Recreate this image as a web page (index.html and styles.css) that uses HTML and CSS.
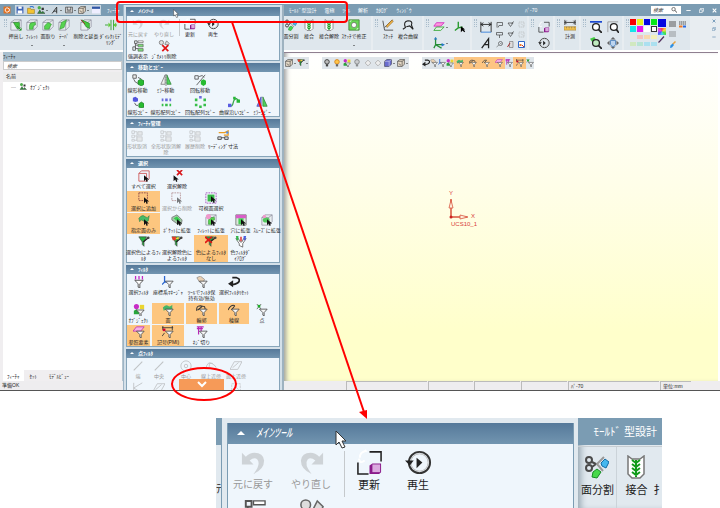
FILE: index.html
```
<!DOCTYPE html>
<html lang="ja">
<head>
<meta charset="utf-8">
<title>メインツール</title>
<link rel="stylesheet" href="styles.css">
</head>
<body>
<svg class="defs" aria-hidden="true">
  <defs>
    <symbol id="cube" viewBox="0 0 14 14"><path d="M1 4l4-3h8v8l-4 4H1z" fill="#e9eef0" stroke="#889" stroke-width=".8"/><path d="M1 4h8v9M9 4l4-3" fill="none" stroke="#889" stroke-width=".8"/></symbol>
    <symbol id="extrude" viewBox="0 0 14 14"><use href="#cube"/><path d="M4 4h7v7H8z" fill="#43c83c" stroke="#176f17" stroke-width=".6"/><path d="M8 8l5 5M13 10v3h-3" stroke="#1b8a1b" fill="none"/></symbol>
    <symbol id="fillet" viewBox="0 0 14 14"><use href="#cube"/><path d="M4 8q0-4 4-4h3v3q-3 0-3 5H4z" fill="#58d450" stroke="#278a25" stroke-width=".6"/></symbol>
    <symbol id="chamfer" viewBox="0 0 14 14"><use href="#cube"/><path d="M3 8l4-4 4 2-3 6H3z" fill="#58d450" stroke="#278a25" stroke-width=".6"/></symbol>
    <symbol id="draft" viewBox="0 0 14 14"><use href="#cube"/><path d="M4 4l6-3-3 9-5 2z" fill="#58d450" stroke="#278a25" stroke-width=".6"/></symbol>
    <symbol id="extend" viewBox="0 0 14 14"><use href="#cube"/><path d="M2 1l9 4v6l-4-2z" fill="#43c83c" stroke="#176f17" stroke-width=".6"/><path d="M1 1l5 5" stroke="#a22"/></symbol>
    <symbol id="direct" viewBox="0 0 14 14"><path d="M7 1v12M10 1v12M0 7h4M14 7h-4" stroke="#2a9c2a"/><path d="M4 4v6l3-3zM13 4v6l-3-3z" fill="#62cf35"/></symbol>
    <symbol id="scissors" viewBox="0 0 24 24"><g fill="none" stroke="#4a4a4a" stroke-width="2"><circle cx="4" cy="5" r="3"/><circle cx="4" cy="13" r="3"/><path d="M7 7l4 2-4 3"/></g><path d="M19 2l-7 7 6 7" fill="none" stroke="#999" stroke-width="2"/><path d="M16 8l4-4 4 3-3 6-4-2z" fill="#45b8ef" stroke="#126ba5"/><path d="M8 17l4-3 4 3-4 6-5-1z" fill="#47d94a" stroke="#168d25"/></symbol>
    <symbol id="join" viewBox="0 0 24 24"><path d="M4 1l4 3h8l4-3v18l-4 4H8l-4-4z" fill="#fff" stroke="#777" stroke-width="1.5"/><path d="M8 5l4 3 4-3M8 9l4 3 4-3M8 13l4 3 4-3M8 17l4 3 4-3M12 5v17" fill="none" stroke="#119b1b" stroke-width="2"/></symbol>
    <symbol id="sketchfix" viewBox="0 0 14 14"><path d="M1 1h12v12H1z" fill="#69d656" stroke="#47863e"/><circle cx="7" cy="7" r="3" fill="#fff" stroke="#555" stroke-width=".7"/><path d="M2 3l2-1M12 11l-2 1" stroke="#fff"/></symbol>
    <symbol id="sketch" viewBox="0 0 14 14"><path d="M1 2l2 11h10M3 10l9-9" fill="none" stroke="#444"/><path d="M5 8l7-7 1 2-7 7z" fill="#f0b445" stroke="#875a19" stroke-width=".6"/></symbol>
    <symbol id="curve" viewBox="0 0 14 14"><path d="M1 12l3-2q-3-7 3-8 6 0 4 5l2 5-4-4-4 1" fill="none" stroke="#222" stroke-width="1.3"/></symbol>
    <symbol id="layers" viewBox="0 0 14 14"><path d="M4 2h9l-4 4H1z" fill="#f9d" stroke="#d42ec2"/><path d="M4 7h9l-4 4H1z" fill="#dff5df" stroke="#37a637"/></symbol>
    <symbol id="axes" viewBox="0 0 14 14"><path d="M3 1v8h9M3 9l-2 4M3 9l7 4" fill="none" stroke="#248e36" stroke-width="1.5"/><path d="M1 3l2-3 2 3M10 7l4 2-4 2" fill="#2578c9"/></symbol>
    <symbol id="axescur" viewBox="0 0 14 14"><path d="M5 1v7l-4 3M5 8l5-1" fill="none" stroke="#299b2f" stroke-width="1.6"/><path d="M8 6v7l2-2 2 2 1-1-2-2h2z"/></symbol>
    <symbol id="dim" viewBox="0 0 14 14"><path d="M1 1v12M13 1v12M1 4h12M1 4l3-2M1 4l3 2M13 4l-3-2M13 4l-3 2" stroke="#222" fill="none"/><path d="M1 13h12" stroke="#2b78d8"/></symbol>
    <symbol id="note" viewBox="0 0 14 14"><path d="M2 13L10 2v11M5 9h5" stroke="#222" fill="none" stroke-width="1.5"/></symbol>
    <symbol id="flag" viewBox="0 0 14 14"><path d="M2 13V3h11v6H6M6 9l-2 4" stroke="#444" fill="none" stroke-width="1.4"/></symbol>
    <symbol id="tri" viewBox="0 0 14 14"><path d="M2 4h10l-5 7zM9 5l5-4" stroke="#444" fill="none" stroke-width="1.4"/></symbol>
    <symbol id="tee" viewBox="0 0 14 14"><path d="M1 3h12v5H1zM7 8v6" stroke="#444" fill="none" stroke-width="1.4"/></symbol>
    <symbol id="frame" viewBox="0 0 14 14"><path d="M2 2h10v10H2z" stroke="#aaa" fill="none" stroke-dasharray="3 1"/><path d="M6 5l4 4" stroke="#aaa"/></symbol>
    <symbol id="balloon" viewBox="0 0 14 14"><circle cx="9" cy="5" r="4" stroke="#444" fill="none" stroke-width="1.3"/><path d="M6 8l-5 4M8 5h3" stroke="#444"/></symbol>
    <symbol id="doc" viewBox="0 0 14 14"><path d="M5 1h7v12H5z" fill="#ddd" stroke="#555"/><path d="M1 12l5-8" stroke="#a33" stroke-width="2"/></symbol>
    <symbol id="table" viewBox="0 0 14 14"><path d="M1 1h12v12H1z" fill="#fff" stroke="#2f68c9" stroke-width="2"/><path d="M3 6h4v4H3z" fill="#f17a28"/><path d="M8 8l4 4" stroke="#b33" stroke-width="2"/></symbol>
    <symbol id="update" viewBox="0 0 28 28"><path d="M14 3h12v10M2 14v12h11" fill="none" stroke="#222" stroke-width="1.6"/><path d="M4 9q0-6 6-7l-1-1M9 12q-5 4-6-2" fill="none" stroke="#fff" stroke-width="2"/><path d="M14 17l3-2h9v9l-2 2H14z" fill="#8a1b8a"/><path d="M17 16h8v8h-8z" fill="#dba9df"/></symbol>
    <symbol id="replay" viewBox="0 0 28 28"><circle cx="15" cy="14" r="11" fill="none" stroke="#333" stroke-width="2"/><circle cx="15" cy="14" r="9" fill="none" stroke="#bbb"/><path d="M0 12h9l-4 5z" fill="#222"/><path d="M12 9l6 5-6 6z" fill="#222"/></symbol>
    <symbol id="undo" viewBox="0 0 28 28"><path d="M2 4v12h12l-4-4q5-4 8-1 4 5-4 15 11-5 11-14Q24 4 15 4 10 4 6 8z" fill="#b4b7b9"/></symbol>
    <symbol id="redo" viewBox="0 0 28 28"><path d="M26 4v12H14l4-4q-5-4-8-1-4 5 4 15Q3 21 3 12 4 4 13 4q5 0 9 4z" fill="#b4b7b9"/></symbol>
    <symbol id="ruler" viewBox="0 0 14 14"><path d="M1 1v6M13 1v6M1 4h12M3 2L1 4l2 2M11 2l2 2-2 2" stroke="#333" fill="none"/><path d="M0 9h14v4H0z" fill="#f4c44d" stroke="#997224" stroke-width=".6"/><path d="M3 9v2M6 9v2M9 9v2M12 9v2" stroke="#765" stroke-width=".7"/></symbol>
    <symbol id="zoomw" viewBox="0 0 14 14"><path d="M0 1h14" stroke="#1b48d0" stroke-width="2"/><circle cx="7" cy="7" r="4" fill="#fff" stroke="#222" stroke-width="1.5"/><path d="M10 10l4 4" stroke="#222" stroke-width="2"/></symbol>
    <symbol id="zoomf" viewBox="0 0 14 14"><path d="M1 13V1h12" stroke="#999" fill="none"/><circle cx="8" cy="7" r="4" fill="#fff" stroke="#222" stroke-width="1.5"/><path d="M11 10l3 4" stroke="#222" stroke-width="2"/></symbol>
    <symbol id="zoomo" viewBox="0 0 14 14"><path d="M0 2l5-2 3 4-4 4z" fill="#4c4"/><circle cx="7" cy="7" r="4" fill="#bfeabf" stroke="#222" stroke-width="1.5"/><path d="M10 10l4 4" stroke="#222" stroke-width="2"/></symbol>
    <symbol id="pan" viewBox="0 0 14 14"><path d="M7 0l3 3H4zM7 14l3-3H4zM0 7l3-3v6zM14 7l-3-3v6z" fill="#666"/><path d="M4 4h6v5l-2 2H6L4 9z" fill="#bcd4ef" stroke="#457bb8"/></symbol>
    <symbol id="lines" viewBox="0 0 14 14"><path d="M0 2h14M0 6h14M0 10h14" stroke="#555" stroke-width="2"/></symbol>
    <symbol id="linec" viewBox="0 0 14 14"><path d="M0 2h14M0 6h14" stroke="#555" stroke-width="2" stroke-dasharray="3 1"/><path d="M0 11h7" stroke="#f17824" stroke-width="4"/><path d="M8 11h6" stroke="#276ae6" stroke-width="4"/></symbol>
    <symbol id="brush" viewBox="0 0 14 14"><path d="M13 1L7 7" stroke="#e8a33f" stroke-width="3"/><path d="M7 5l3 3-4 5-4 1 1-5z" fill="#2c8fe2"/></symbol>
    <symbol id="pen" viewBox="0 0 14 14"><path d="M12 1L4 10l-3 3" stroke="#53305d" stroke-width="2.5"/></symbol>
    <symbol id="tree" viewBox="0 0 14 14"><path d="M3 1h3v3H3zM1 8h3v4H1zM4 4v6h3M4 6h3" fill="none" stroke="#555"/><path d="M7 5h6v3H7zM7 10h6v3H7z" fill="#7de079" stroke="#555" stroke-width=".7"/><path d="M7 1h6v2H7z" fill="#fff" stroke="#555" stroke-width=".7"/></symbol>
    <symbol id="geodel" viewBox="0 0 14 14"><circle cx="4" cy="3" r="2.5" fill="#ddd" stroke="#666" stroke-width=".8"/><path d="M8 5l2-4 3 3-1 2z" fill="#ddd" stroke="#666" stroke-width=".8"/><path d="M5 6l7 7M12 6l-7 7" stroke="#e21414" stroke-width="2"/></symbol>
    <symbol id="move" viewBox="0 0 14 14"><path d="M1 1h4v4H1z" fill="#eee" stroke="#555"/><path d="M2 6q1 4 5 5M7 4l4 2" fill="none" stroke="#555"/><path d="M7 8l3-2 4 2v4l-3 2-4-2z" fill="#28bb31" stroke="#176b20" stroke-width=".7"/></symbol>
    <symbol id="copy" viewBox="0 0 14 14"><path d="M1 2l3-1 3 2v3L4 7 1 6z" fill="#5256dd"/><path d="M3 8q1 4 4 3" fill="none" stroke="#555"/><path d="M8 9l3-2 3 2v4l-3 1-3-1z" fill="#28bb31" stroke="#176b20" stroke-width=".7"/></symbol>
    <symbol id="mirror" viewBox="0 0 14 14"><path d="M6 1v11H1z" fill="#eee" stroke="#666" stroke-width=".8"/><path d="M8 1v11h5z" fill="#50d25c" stroke="#277c30" stroke-width=".8"/><path d="M7 0v14" stroke="#777" stroke-dasharray="2 1"/></symbol>
    <symbol id="mirrorc" viewBox="0 0 14 14"><path d="M6 1v11H1z" fill="#777bea" stroke="#44a" stroke-width=".8"/><path d="M8 1v11h5z" fill="#50d25c" stroke="#277c30" stroke-width=".8"/></symbol>
    <symbol id="rotate" viewBox="0 0 14 14"><path d="M1 2h4v4H1zM13 1L3 13M6 3q4-3 6 1" fill="none" stroke="#555"/><path d="M8 8l3-2 3 2v4l-3 2-3-2z" fill="#28bb31"/></symbol>
    <symbol id="grid6" viewBox="0 0 14 14"><path d="M2 3h2v3H2zM6 3h3v3H6zM11 3h2v3h-2z" fill="#696bdc"/><path d="M2 9h2v3H2zM6 9h3v3H6zM11 9h2v3h-2z" fill="#37bf49"/></symbol>
    <symbol id="ring" viewBox="0 0 14 14"><path d="M6 0h3v3H6z" fill="#696bdc"/><path d="M1 3h3v3H1zM11 3h3v3h-3zM1 9h3v3H1zM11 9h3v3h-3zM6 11h3v3H6z" fill="#37bf49"/></symbol>
    <symbol id="path" viewBox="0 0 14 14"><path d="M2 11q3 2 4-3t4-5l3 3" fill="none" stroke="#39a64b" stroke-width="1.5"/><path d="M0 9h4v4H0z" fill="#5a5de2"/><path d="M10 4h4v4h-4zM6 1h3v3H6z" fill="#28b638"/></symbol>
    <symbol id="feat" viewBox="0 0 14 14"><path d="M1 1h3v3H1zM1 6h3v3H1zM1 11h3v2H1zM4 2h3M4 7h3M4 12h3M7 2v10" fill="none" stroke="#aaa"/><path d="M8 2h5v4H8zM7 8h6v5H7z" fill="#ddd" stroke="#aaa"/></symbol>
    <symbol id="lead" viewBox="0 0 14 14"><path d="M1 8h4v3H1zM9 8h4v3H9zM5 9h4" fill="#ddd" stroke="#444"/><path d="M2 3h7l4-2v5H8" fill="none" stroke="#eb9c1f" stroke-width="1.5"/><circle cx="12" cy="3" r="1.5" fill="#5590e0"/></symbol>
    <symbol id="arrow" viewBox="0 0 14 14"><path d="M7 6v7l2-2 1 3 1.500-1-1-2h2.500z" fill="#111"/></symbol>
    <symbol id="selall" viewBox="0 0 14 14"><path d="M1 4l3-3h9v9l-3 3H1zM1 4h9v9" fill="none" stroke="#c55"/><use href="#arrow"/></symbol>
    <symbol id="desel" viewBox="0 0 14 14"><use href="#arrow" x="-4"/><path d="M7 0l6 6M13 0L7 6" stroke="#d8171c" stroke-width="2"/></symbol>
    <symbol id="seladd" viewBox="0 0 14 14"><path d="M1 1h10v9H1z" fill="none" stroke="#844" stroke-dasharray="2 1"/><use href="#arrow"/></symbol>
    <symbol id="vis" viewBox="0 0 14 14"><path d="M1 1h12v12H1z" fill="none" stroke="#a34cb8" stroke-dasharray="2 1"/><path d="M3 3h8v8H3z" fill="#39b84a"/><use href="#arrow" y="-1"/></symbol>
    <symbol id="face" viewBox="0 0 14 14"><path d="M1 5q4-5 7-2t5-1l-1 6q-3 3-6 0T2 9z" fill="#48bb67" stroke="#2c7f44" stroke-width=".7"/><use href="#arrow"/></symbol>
    <symbol id="pocket" viewBox="0 0 14 14"><path d="M1 4l6-3 6 6-1 5H8L1 7z" fill="#a5c9a9" stroke="#666" stroke-width=".8"/><path d="M3 5l4-2 4 4-3 2z" fill="#37cd4e"/><use href="#arrow"/></symbol>
    <symbol id="fext" viewBox="0 0 14 14"><use href="#fillet"/><circle cx="4" cy="3" r="3" fill="#e9c"/><use href="#arrow"/></symbol>
    <symbol id="hole" viewBox="0 0 14 14"><path d="M1 1h12v12H1z" fill="#dce8de" stroke="#777"/><path d="M1 1h12v4H1z" fill="#d75fc7"/><path d="M4 5h6v7H4z" fill="#47cc56"/><use href="#arrow"/></symbol>
    <symbol id="smooth" viewBox="0 0 14 14"><use href="#cube"/><ellipse cx="6" cy="7" rx="4" ry="3" fill="#52c85e"/><circle cx="4" cy="3" r="2" fill="#e9c"/><use href="#arrow"/></symbol>
    <symbol id="funnel" viewBox="0 0 14 14"><path d="M4 6h9L9.500 10v4L8 13v-3z" fill="#f6f6f6" stroke="#444" stroke-width=".9"/></symbol>
    <symbol id="cfil" viewBox="0 0 14 14"><path d="M1 1h9L7 7v5l-2-2V7z" fill="#24b340" stroke="#444" stroke-width=".8"/><path d="M6 7l6-5" stroke="#222" stroke-width="1.500"/><circle cx="12" cy="2" r="1.500" fill="#444"/></symbol>
    <symbol id="cfil2" viewBox="0 0 14 14"><use href="#cfil"/><path d="M1 1h5v4H2z" fill="#e23b27"/><path d="M5 3l4-2v3z" fill="#ffd83a"/></symbol>
    <symbol id="cfilx" viewBox="0 0 14 14"><use href="#cfil"/><path d="M0 1l8 7M8 1L0 8" stroke="#e01515" stroke-width="2"/></symbol>
    <symbol id="cdlg" viewBox="0 0 14 14"><path d="M1 3h3l2 4h2l2-4h3l-4 6v4l-4-2V9z" fill="#fff" stroke="#444" stroke-width=".8"/><path d="M1 0h3v5H2z" fill="#32b74b"/><path d="M6 1h2v5H6z" fill="#e04848"/><path d="M10 0h3l-1 5h-2z" fill="#4a60df"/></symbol>
    <symbol id="fsel" viewBox="0 0 14 14"><path d="M2 5h10L8 9v5l-2-1V9z" fill="#fff" stroke="#444"/><path d="M3 0v4M7 0v4M11 0v4" stroke="#c32ac4" stroke-width="1.5"/></symbol>
    <symbol id="fcs" viewBox="0 0 14 14"><path d="M3 0v7h6M3 7l-3 3" fill="none" stroke="#2b66cf" stroke-width="1.5"/><use href="#funnel"/></symbol>
    <symbol id="fhand" viewBox="0 0 14 14"><path d="M1 2l4-2 5 4-2 4-4-1z" fill="#e8d0b4" stroke="#777" stroke-width=".7"/><use href="#funnel"/></symbol>
    <symbol id="reset" viewBox="0 0 14 14"><path d="M5 2h5q4 1 3 4t-8 4" fill="none" stroke="#222" stroke-width="2"/><path d="M0 9l6-4v8z" fill="#222"/></symbol>
    <symbol id="fobj" viewBox="0 0 14 14"><circle cx="4" cy="3" r="3" fill="#c72cc7"/><path d="M8 1h5v5H8z" fill="#ead530"/><path d="M1 8l3-2 3 2v4H1z" fill="#27a63c"/><use href="#funnel" y="1"/></symbol>
    <symbol id="fface" viewBox="0 0 14 14"><path d="M1 4q4-4 6-2t5-1v5q-5 3-7 0L2 8z" fill="#46b568"/><use href="#funnel"/></symbol>
    <symbol id="floop" viewBox="0 0 14 14"><path d="M1 8q-1-6 4-6l5 1 1 4M2 7l5-4" fill="none" stroke="#333" stroke-width="1.2"/><use href="#funnel"/></symbol>
    <symbol id="fedge" viewBox="0 0 14 14"><path d="M0 7q4-7 8-5M4 7l4-5" fill="none" stroke="#333" stroke-width="1.2"/><use href="#funnel"/></symbol>
    <symbol id="fpt" viewBox="0 0 14 14"><path d="M1 0l5 6M6 0L1 6" stroke="#666"/><path d="M2 1h3v3H2z" fill="#1cae29"/><use href="#funnel"/></symbol>
    <symbol id="fref" viewBox="0 0 14 14"><path d="M4 1h9L9 6H0z" fill="#f6b1e4" stroke="#bf38ad"/><use href="#funnel"/></symbol>
    <symbol id="fpmi" viewBox="0 0 14 14"><path d="M0 2h13M1 0v5M12 0v5M3 8l-3 4" stroke="#333"/><path d="M1 3h3v3H1z" fill="#c03"/><use href="#funnel"/></symbol>
    <symbol id="fthr" viewBox="0 0 14 14"><path d="M1 1h8M1 3h7M3 1v9M6 1v6" stroke="#b928b7" stroke-width="1.4"/><use href="#funnel"/></symbol>
    <symbol id="pend" viewBox="0 0 14 14"><path d="M2 12L12 2" stroke="#999" stroke-width="1.200"/></symbol>
    <symbol id="pcen" viewBox="0 0 14 14"><circle cx="7" cy="7" r="6" fill="none" stroke="#999"/><circle cx="7" cy="7" r="2" fill="none" stroke="#999"/></symbol>
    <symbol id="pcur" viewBox="0 0 14 14"><path d="M1 10q2-9 7-6t5 5M5 8V4h4" fill="none" stroke="#999"/></symbol>
    <symbol id="ppl" viewBox="0 0 14 14"><path d="M5 2h9l-5 9H0zM3 9l7-6" fill="none" stroke="#999"/></symbol>
    <symbol id="px" viewBox="0 0 14 14"><path d="M2 1v12M2 7l10-6M2 7l10 6" fill="none" stroke="#999"/></symbol>
    <symbol id="bulb" viewBox="0 0 14 14"><circle cx="7" cy="5" r="4" fill="#bbb" stroke="#333" stroke-width="1.5"/><path d="M5 9h4v4H5z" fill="#444"/></symbol>
    <symbol id="bulby" viewBox="0 0 14 14"><circle cx="7" cy="5" r="4" fill="#ffc64a" stroke="#d48119" stroke-width="1.5"/><path d="M5 9h4v4H5z" fill="#666"/></symbol>
    <symbol id="dia" viewBox="0 0 14 14"><path d="M7 2l5 5-5 5-5-5z" fill="#eee" stroke="#aaa" stroke-width="1.4"/></symbol>
    <symbol id="box" viewBox="0 0 14 14"><path d="M1 4l4-3h8v8l-4 4H1z" fill="#6b6ed1" stroke="#334"/><path d="M1 4h8v9M9 4l4-3" stroke="#dde" fill="none"/></symbol>
    <symbol id="boxw" viewBox="0 0 14 14"><path d="M1 4l4-3h8v8l-4 4H1z" fill="#e4d8c6" stroke="#333"/><path d="M1 4h8v9M9 4l4-3M3 8l4 3" stroke="#333" fill="none"/></symbol>
    <symbol id="save" viewBox="0 0 14 14"><path d="M1 1h12v12H1z" fill="#3d63b5"/><path d="M4 1h6v4H4zM3 8h8v5H3z" fill="#fff"/></symbol>
    <symbol id="open" viewBox="0 0 14 14"><path d="M1 4h5l1 2h6v7H1z" fill="#f3c332" stroke="#987519"/><path d="M5 2q4-3 7 1" fill="none" stroke="#3578cf" stroke-width="2"/></symbol>
    <symbol id="app" viewBox="0 0 14 14"><path d="M1 1h12v12H1z" fill="#e4701f"/><path d="M4 5l3-2 4 2v4l-4 2-3-2z" fill="none" stroke="#fff" stroke-width="1.500"/></symbol>
    <symbol id="grp" viewBox="0 0 14 14"><circle cx="4" cy="3" r="3" fill="#4cae4a"/><path d="M8 3h4v4H8z" fill="#333"/><path d="M1 13l4-6 3 5 2-3 4 4z" fill="#318f3c" stroke="#222" stroke-width=".7"/></symbol>
    <symbol id="prn" viewBox="0 0 14 14"><path d="M1 2h12v10H1z" fill="#ddd" stroke="#222"/><path d="M4 2v5h6V2M3 9h8" fill="none" stroke="#222"/></symbol>
    <symbol id="win" viewBox="0 0 14 14"><path d="M0 1h14v12H0z" fill="#eef"/><path d="M0 1h14v4H0z" fill="#2f56a5"/></symbol>
    <symbol id="mag" viewBox="0 0 14 14"><circle cx="6" cy="5" r="4" fill="none" stroke="#333" stroke-width="1.500"/><path d="M9 8l5 5" stroke="#333" stroke-width="2"/></symbol>
    <symbol id="min" viewBox="0 0 14 14"><path d="M1 7h12" stroke="currentColor" stroke-width="2.500"/></symbol>
    <symbol id="max" viewBox="0 0 14 14"><path d="M4 4V1h9v8h-3M1 5h8v8H1z" fill="none" stroke="currentColor" stroke-width="2"/></symbol>
    <symbol id="cls" viewBox="0 0 14 14"><path d="M2 2l10 10M12 2L2 12" stroke="currentColor" stroke-width="3"/></symbol>
    <symbol id="cursor" viewBox="0 0 12 19"><path d="M1 1v14l3-3 3 6 3-1-3-6h4z" fill="#fff" stroke="#333"/></symbol>
  </defs>
</svg>

<main class="app">
  <header class="titlebar">
    <svg class="logo"><use href="#app"/></svg>
    <nav class="quick">
      <button aria-label="保存"><svg><use href="#save"/></svg></button>
      <button aria-label="開く"><svg><use href="#open"/></svg></button>
      <button class="drop" aria-label="部品"><svg><use href="#grp"/></svg></button>
      <button class="drop" aria-label="注記"><svg><use href="#note"/></svg></button>
      <button class="drop" aria-label="印刷"><svg><use href="#prn"/></svg></button>
      <button class="drop" aria-label="表示"><svg><use href="#boxw"/></svg></button>
      <button aria-label="ウィンドウ"><svg><use href="#win"/></svg></button>
    </nav>
    <a class="first" href="#">ﾌｨｰﾁｬ</a>
    <nav class="menus"><a href="#">ﾓｰﾙﾄﾞ型設計</a><a href="#">電極</a><a href="#">ﾂｰﾙ</a><a href="#">解析</a><a href="#">ｶﾀﾛｸﾞ</a><a href="#">ｳｨﾝﾄﾞｳ</a></nav>
    <span class="caption">ﾊﾟ-70</span>
    <label class="find"><input type="text" placeholder="検索" aria-label="検索"><svg><use href="#mag"/></svg></label>
    <div class="wins"><button aria-label="最小化"><svg><use href="#min"/></svg></button><button aria-label="元のサイズ"><svg><use href="#max"/></svg></button><button aria-label="閉じる"><svg><use href="#cls"/></svg></button></div>
  </header>

  <section class="ribbon">
    <div class="group solid"><i class="grip"></i>
      <button class="w16"><svg><use href="#extrude"/></svg>押出し</button>
      <button class="w16"><svg><use href="#fillet"/></svg>ﾌｨﾚｯﾄ<b class="more"></b></button>
      <button class="w16"><svg><use href="#chamfer"/></svg>面取り</button>
      <button class="w16"><svg><use href="#draft"/></svg>ﾃｰﾊﾟ<b class="more"></b></button>
      <button class="w28"><svg><use href="#extend"/></svg>削除と延長</button>
      <button class="w22"><svg><use href="#direct"/></svg>ﾀﾞｲﾚｸﾄﾓﾃﾞ<br>ﾘﾝｸﾞ</button>
    </div>
    <div class="group"></div>
    <div class="group solid">
      <button class="w18"><svg><use href="#scissors"/></svg>面分割</button>
      <button class="w18"><svg><use href="#join"/></svg>接合</button>
      <button class="w22"><svg><use href="#join"/></svg>接合解除</button>
      <button class="w28"><svg><use href="#sketchfix"/></svg>ｽｹｯﾁで修正<b class="more"></b></button>
    </div>
    <div class="group"><i class="grip"></i>
      <button class="w18"><svg><use href="#sketch"/></svg>ｽｹｯﾁ</button>
      <button class="w22"><svg><use href="#curve"/></svg>複合曲線</button>
    </div>
    <div class="group"><i class="grip"></i>
      <div class="tools two">
        <button class="drop" aria-label="作業平面"><svg><use href="#layers"/></svg></button><button aria-label="座標系選択"><svg><use href="#axescur"/></svg></button>
        <button class="drop" aria-label="座標系"><svg><use href="#axes"/></svg></button>
      </div>
    </div>
    <div class="group"><i class="grip"></i>
      <div class="tools one"><button aria-label="寸法"><svg><use href="#dim"/></svg></button><button aria-label="文字"><svg><use href="#note"/></svg></button></div>
      <div class="tools small">
        <button aria-label="引出線"><svg><use href="#flag"/></svg></button><button aria-label="仕上げ"><svg><use href="#tri"/></svg></button><button aria-label="枠"><svg><use href="#frame"/></svg></button>
        <button aria-label="公差"><svg><use href="#tee"/></svg></button><button aria-label="データム"><svg><use href="#tri"/></svg></button><button aria-label="選択枠"><svg><use href="#frame"/></svg></button>
        <button aria-label="バルーン"><svg><use href="#balloon"/></svg></button><button aria-label="文書"><svg><use href="#doc"/></svg></button><button aria-label="表"><svg><use href="#table"/></svg></button>
      </div>
    </div>
    <div class="group"><i class="grip"></i><div class="tools one"><button aria-label="更新"><svg><use href="#update"/></svg></button><button aria-label="再生"><svg><use href="#replay"/></svg></button></div></div>
    <div class="group"><i class="grip"></i><button class="w18"><svg><use href="#ruler"/></svg>計測</button></div>
    <div class="group"><i class="grip"></i><div class="tools two"><button aria-label="窓拡大"><svg><use href="#zoomw"/></svg></button><button aria-label="全体表示"><svg><use href="#zoomf"/></svg></button><button aria-label="要素拡大"><svg><use href="#zoomo"/></svg></button><button aria-label="移動表示"><svg><use href="#pan"/></svg></button></div></div>
    <div class="group"><i class="grip"></i>
      <div class="swatches">
        <i class="red"></i><i class="yel"></i><i class="blu"></i><i class="grn"></i>
        <i class="cya"></i><i class="mag"></i><i class="whi"></i><i class="whi line"></i>
        <i class="p1"></i><i class="p2"></i><i class="p3"></i><i class="p4"></i>
        <i class="p5"></i><i class="p6"></i><i class="p7"></i><i class="p7"></i>
      </div>
      <div class="current"><i class="blu"></i><i class="rainbow"></i><svg><use href="#pen"/></svg></div>
      <div class="styles"><button aria-label="線種"><svg><use href="#lines"/></svg></button><button aria-label="線色"><svg><use href="#linec"/></svg></button><button aria-label="線幅" disabled><svg><use href="#lines"/></svg></button><span></span><button aria-label="属性コピー"><svg><use href="#brush"/></svg></button></div>
    </div>
    <div class="group mdi"><button aria-label="文書を閉じる"><svg><use href="#cls"/></svg></button><button aria-label="文書を元に戻す"><svg><use href="#max"/></svg></button><button aria-label="文書を最小化"><svg><use href="#min"/></svg></button></div>
  </section>

  <section class="work">
    <aside class="side">
      <h2>ﾌｨｰﾁｬ</h2>
      <input type="text" placeholder="検索" aria-label="ﾌｨｰﾁｬ検索">
      <div class="colhead">名前</div>
      <ul class="tree"><li><span>┈</span><svg><use href="#grp"/></svg>ｵﾌﾞｼﾞｪｸﾄ</li></ul>
      <nav class="tabs"><button class="on">ﾌｨｰﾁｬ</button><button>ｾｯﾄ</button><button>ﾓﾃﾞﾙﾋﾞｭｰ</button></nav>
    </aside>
    <section class="canvas">
      <div class="bars">
        <div class="bar b1"><button class="drop" aria-label="選択"><svg><use href="#boxw"/></svg></button><button class="drop" aria-label="色"><svg><use href="#cfil2"/></svg></button></div>
        <div class="bar b2"><button aria-label="表示"><svg><use href="#bulb"/></svg></button><button aria-label="点灯"><svg><use href="#bulby"/></svg></button><button aria-label="切替"><svg><use href="#fobj"/></svg></button><button disabled aria-label="消灯"><svg><use href="#bulb"/></svg></button><button aria-label="前"><svg><use href="#dia"/></svg></button><button aria-label="次"><svg><use href="#dia"/></svg></button><button class="drop" aria-label="シェード"><svg><use href="#box"/></svg></button><button class="drop" aria-label="ワイヤ"><svg><use href="#boxw"/></svg></button></div>
        <div class="bar b3"><button aria-label="リセット"><svg><use href="#reset"/></svg></button><button aria-label="保持"><svg><use href="#fhand"/></svg></button><button aria-label="座標系"><svg><use href="#fcs"/></svg></button><button aria-label="オブジェクト"><svg><use href="#fobj"/></svg></button><button class="on" aria-label="面"><svg><use href="#fface"/></svg></button><button class="on" aria-label="輪郭"><svg><use href="#floop"/></svg></button><button class="on" aria-label="稜線"><svg><use href="#fedge"/></svg></button><button class="on" aria-label="参照"><svg><use href="#fref"/></svg></button><button aria-label="ネジ"><svg><use href="#fthr"/></svg></button><button class="on" aria-label="記号"><svg><use href="#fpmi"/></svg></button><button aria-label="点"><svg><use href="#fpt"/></svg></button></div>
      </div>
      <svg class="ucs" viewBox="0 0 34 42"><g fill="none" stroke="#d8553f"><path d="M6 30V12M6 30h16" stroke-width="1.500"/><path d="M4 21l2-8 2 8zM15 28l8 2-8 2z" fill="#fff0dc" stroke-width=".8"/></g><circle cx="6" cy="30" r="1.500" fill="#c22"/><g fill="#d8403a"><text x="4" y="8">Y</text><text x="26" y="31">X</text><text x="6" y="39">UCS10_1</text></g></svg>
    </section>
  </section>
  <footer class="status"><span class="msg">準備OK</span><span></span><span></span><span></span><span></span><span>ﾊﾟ-70</span><span>単位:mm</span></footer>

  <aside class="palette">
    <section class="card"><h3>ﾒｲﾝﾂｰﾙ</h3>
      <div class="grid g1">
        <button disabled><svg><use href="#undo"/></svg>元に戻す</button><button disabled><svg><use href="#redo"/></svg>やり直し</button><i class="rule"></i><button><svg><use href="#update"/></svg>更新</button><button><svg><use href="#replay"/></svg>再生</button>
        <button><svg><use href="#tree"/></svg>強調表示</button><button><svg><use href="#geodel"/></svg>ｼﾞｵﾒﾄﾘ削除</button>
      </div>
    </section>
    <section class="card"><h3>移動とｺﾋﾟｰ</h3>
      <div class="grid g2">
        <button><svg><use href="#move"/></svg>線形移動</button><button><svg><use href="#mirror"/></svg>ﾐﾗｰ移動</button><button><svg><use href="#rotate"/></svg>回転移動</button><i></i><i></i>
        <button><svg><use href="#copy"/></svg>線形ｺﾋﾟｰ</button><button><svg><use href="#grid6"/></svg>線形配列ｺﾋﾟｰ</button><button><svg><use href="#ring"/></svg>回転配列ｺﾋﾟｰ</button><button><svg><use href="#path"/></svg>曲線沿いｺﾋﾟｰ</button><button><svg><use href="#mirrorc"/></svg>ﾐﾗｰｺﾋﾟｰ</button>
      </div>
    </section>
    <section class="card"><h3>ﾌｨｰﾁｬ管理</h3>
      <div class="grid g3">
        <button disabled><svg><use href="#feat"/></svg>形状取消</button><button disabled><svg><use href="#feat"/></svg>全形状取消解<br>除</button><button disabled><svg><use href="#feat"/></svg>履歴削除</button><button><svg><use href="#lead"/></svg>ﾘｰﾃﾞｨﾝｸﾞ寸法</button>
      </div>
    </section>
    <section class="card"><h3>選択</h3>
      <div class="grid g4">
        <button><svg><use href="#selall"/></svg>すべて選択</button><button><svg><use href="#desel"/></svg>選択解除</button><i></i><i></i><i></i>
        <button class="on"><svg><use href="#seladd"/></svg>選択に追加</button><button disabled><svg><use href="#seladd"/></svg>選択から削除</button><button><svg><use href="#vis"/></svg>可視面選択</button><i></i><i></i>
        <button class="on"><svg><use href="#face"/></svg>指定面のみ</button><button><svg><use href="#pocket"/></svg>ﾎﾟｹｯﾄに拡張</button><button><svg><use href="#fext"/></svg>ﾌｨﾚｯﾄに拡張</button><button><svg><use href="#hole"/></svg>穴に拡張</button><button><svg><use href="#smooth"/></svg>ｽﾑｰｽﾞに拡張</button>
        <button><svg><use href="#cfil"/></svg>選択色によるﾌｨ<br>ﾙﾀ</button><button><svg><use href="#cfil2"/></svg>選択解除色に<br>よるﾌｨﾙﾀ</button><button class="on"><svg><use href="#cfilx"/></svg>色によるﾌｨﾙﾀ<br>なし</button><button><svg><use href="#cdlg"/></svg>色ﾌｨﾙﾀﾀﾞ<br>ｲｱﾛｸﾞ</button>
      </div>
    </section>
    <section class="card"><h3>ﾌｨﾙﾀ</h3>
      <div class="grid g5">
        <button><svg><use href="#fsel"/></svg>選択ﾌｨﾙﾀ</button><button><svg><use href="#fcs"/></svg>座標系ﾏﾈｰｼﾞｬ</button><button><svg><use href="#fhand"/></svg>ﾂｰﾙでﾌｨﾙﾀ保<br>持有効/無効</button><button><svg><use href="#reset"/></svg>選択ﾌｨﾙﾀﾘｾｯﾄ</button><i></i>
        <button><svg><use href="#fobj"/></svg>ｵﾌﾞｼﾞｪｸﾄ</button><button class="on"><svg><use href="#fface"/></svg>面</button><button class="on"><svg><use href="#floop"/></svg>輪郭</button><button class="on"><svg><use href="#fedge"/></svg>稜線</button><button><svg><use href="#fpt"/></svg>点</button>
        <button class="on"><svg><use href="#fref"/></svg>参照要素</button><button class="on"><svg><use href="#fpmi"/></svg>記号(PMI)</button><button><svg><use href="#fthr"/></svg>ﾈｼﾞ切り</button>
      </div>
    </section>
    <section class="card"><h3>点ﾌｨﾙﾀ</h3>
      <div class="grid g6">
        <button disabled><svg><use href="#pend"/></svg>端</button><button disabled><svg><use href="#pend"/></svg>中央</button><button disabled><svg><use href="#pcen"/></svg>中心</button><button disabled><svg><use href="#pcur"/></svg>線上近傍</button><button disabled><svg><use href="#ppl"/></svg>面上近傍</button>
        <button disabled aria-label="交点"><svg><use href="#px"/></svg></button><button disabled aria-label="投影"><svg><use href="#ppl"/></svg></button><i></i><i></i><button disabled aria-label="枠"><svg><use href="#frame"/></svg></button>
      </div>
    </section>
    <button class="scroll" aria-label="下へ"><svg viewBox="0 0 14 8"><path d="M3 1l4 4 4-4" fill="none" stroke="#fff" stroke-width="2"/></svg></button>
  </aside>
  <svg class="pointer"><use href="#cursor"/></svg>
</main>

<section class="detail">
  <div class="edge"><div class="cap"></div><span>ﾃ</span></div>
  <div class="big">
    <h3>ﾒｲﾝﾂｰﾙ</h3>
    <svg class="bigpointer"><use href="#cursor"/></svg>
    <div class="bigrow">
      <button disabled><svg><use href="#undo"/></svg>元に戻す</button><button disabled><svg><use href="#redo"/></svg>やり直し</button><i class="rule"></i><button><svg><use href="#update"/></svg>更新</button><button><svg><use href="#replay"/></svg>再生</button>
      <button aria-label="強調表示"><svg><use href="#tree"/></svg></button><button aria-label="ｼﾞｵﾒﾄﾘ削除"><svg><use href="#geodel"/></svg></button>
    </div>
  </div>
  <div class="rest">
    <div class="cap"><a href="#">ﾓｰﾙﾄﾞ 型設計</a></div>
    <div class="restrow"><button><svg><use href="#scissors"/></svg>面分割</button><button><svg><use href="#join"/></svg>接合</button><button class="cut"><svg></svg>扌</button></div>
  </div>
</section>

<svg class="marks" viewBox="0 0 720 508" aria-hidden="true">
  <g fill="none" stroke="#f00" stroke-width="2"><rect x="117" y="2" width="230" height="20" rx="3"/><path d="M232 22l132 390"/><ellipse cx="204" cy="384" rx="32" ry="16"/></g>
  <path d="M359 412l8-2 0 9z" fill="#f00"/>
</svg>
</body>
</html>
```

FILE: styles.css
```
* { box-sizing: border-box; }
html, body { margin: 0; }
body {
  height: 100vh;
  display: grid;
  grid-template-rows: 391fr 27fr 90fr;
  overflow: hidden;
  position: relative;
  background: #fff;
  color: #1c1c1c;
  font-family: "Liberation Sans", "Noto Sans CJK JP", sans-serif;
  font-size: 5px;
  line-height: 6px;
}
.defs { position: absolute; width: 0; height: 0; }
button, input { font: inherit; color: inherit; background: none; border: 0; padding: 0; margin: 0; min-width: 0; }
a { color: inherit; text-decoration: none; }
h2, h3 { margin: 0; font: inherit; }
svg { display: block; flex: none; overflow: visible; }
i { font-style: normal; }

.app { position: relative; display: flex; flex-direction: column; padding-top: 4px; border-bottom: 1px solid #555; overflow: hidden; min-height: 0; }

.titlebar { display: grid; grid-template-columns: 12px 86px 179px 220px 1fr 30px 36px; align-items: center; column-gap: 3px; height: 12px; background: #7b9cb3; color: #fff; flex: none; }
.logo { width: 8px; height: 8px; margin-left: 3px; }
.quick { display: flex; align-items: center; justify-content: space-around; height: 10px; background: #cbd8e1; }
.quick svg { width: 8px; height: 8px; }
.first { padding-left: 3px; }
.menus { display: flex; gap: 8px; padding-left: 3px; }
.caption { padding-left: 16px; }
.find { display: flex; align-items: center; background: #fff; height: 8px; color: #222; padding: 0 2px; }
.find input { width: 18px; font-style: italic; }
.find svg { width: 6px; height: 6px; }
input::placeholder { color: #444; font-style: italic; opacity: 1; }
.wins { display: flex; gap: 8px; padding-left: 2px; }
.wins svg { width: 5px; height: 5px; }

.drop { display: flex; align-items: center; gap: 1px; }
.drop::after { content: ""; border: 1px solid transparent; border-top-color: #222; border-bottom: 0; }

.ribbon { display: grid; grid-template-columns: 123px 155px 89px 49px 46px 55px 24px 24px 41px 66px 1fr; column-gap: 2px; height: 34px; background: #e8edf1; flex: none; }
.group { display: flex; background: #dfe7ed; padding-top: 3px; overflow: hidden; }
.grip { width: 3px; height: 8px; margin: 0 1px 0 2px; flex: none; border: dotted #a9bccb; border-width: 0 1px; }
.group.solid .grip { margin-left: 4px; }
.group > button { display: flex; flex-direction: column; align-items: center; white-space: nowrap; position: relative; height: 31px; line-height: 6px; }
.group > button svg { width: 12px; height: 12px; margin-bottom: 2px; }
.w16 { width: 16px; } .w18 { width: 18px; } .w22 { width: 22px; } .w28 { width: 28px; }
.more { margin-top: 6px; border: 1px solid transparent; border-top-color: #222; }
.tools { display: grid; align-content: start; justify-items: center; align-items: center; flex: 1; }
.tools.two { grid-template-columns: 1fr 1fr; grid-auto-rows: 16px; }
.tools.one { grid-auto-rows: 16px; }
.tools.one svg, .tools.two svg { width: 12px; height: 12px; }
.tools.small { grid-template-columns: repeat(3, 1fr); grid-auto-rows: 10px; flex: 2; }
.tools.small svg { width: 7px; height: 7px; }
.swatches { display: grid; grid-template-columns: repeat(4, 6px); grid-auto-rows: 6px; gap: 1px; align-content: start; }
.swatches i:nth-child(n+9) { margin-top: 2px; }
.red { background: #f60000; } .yel { background: #eaf020; } .blu { background: #0808e0; } .grn { background: #08e818; }
.cya { background: #18e4e8; } .mag { background: #e818e8; } .whi { background: #fff; } .line { border: 1px solid #333; }
.p1 { background: #e4e8e4; } .p2 { background: #f3c4c0; } .p3 { background: #f6d9b0; } .p4 { background: #f2f0b8; }
.p5 { background: #d1e8c0; } .p6 { background: #b8e4d4; } .p7 { background: #abe0f0; }
.current { display: grid; grid-template-rows: 8px 7px 10px; gap: 1px; width: 8px; margin-left: 1px; align-content: start; }
.current svg { width: 7px; height: 7px; }
.rainbow { background: conic-gradient(#f44, #fd4, #4d4, #4df, #55f, #e4e, #f44); }
.styles { display: grid; grid-template-columns: 8px 8px; grid-auto-rows: 10px; gap: 0 2px; padding-left: 3px; align-content: start; }
.styles svg { width: 7px; height: 7px; }
button:disabled svg { opacity: .55; }
.mdi { background: none; flex-direction: column; align-items: flex-end; padding-right: 4px; }
.mdi > button { height: 8px; color: #6b93b5; }
.mdi > button svg { width: 4px; height: 4px; }

.work { flex: 1; display: grid; grid-template-columns: 123px 1fr; min-height: 0; padding-top: 2px; background: #fff; }
.side { display: flex; flex-direction: column; background: #f0eef0; border-right: 1px solid #b5c5d0; padding-left: 3px; min-height: 0; }
.side h2 { height: 9px; line-height: 9px; background: #a9bfce; color: #222; }
.side input { height: 9px; background: #fff; padding-left: 3px; border: 1px solid #ccc; width: 100%; }
.colhead { margin-top: 2px; height: 10px; line-height: 9px; background: #ececec; padding-left: 3px; }
.tree { flex: 1; margin: 0; padding: 1px 0 0 8px; list-style: none; background: #fff; }
.tree li { display: flex; align-items: center; gap: 3px; }
.tree svg { width: 8px; height: 7px; }
.tabs { display: flex; height: 11px; }
.tabs button { padding: 0 6px; }
.tabs .on { background: #fff; padding: 0 4px; }

.canvas { position: relative; margin: 0 2px 0 161px; border-top: 1px solid #8f7f90; background: linear-gradient(#fff, #fffee9 40%, #ffffcb 85%); box-shadow: inset 5px 0 5px -3px #999; }
.bars { display: grid; grid-template-columns: 25px 87px 112px; gap: 13px; padding-top: 4px; }
.bar { display: flex; align-items: center; justify-content: space-around; height: 12px; background: #dfe5ea; }
.bar svg { width: 8px; height: 8px; }
.bar .on { background: #fdc582; align-self: stretch; flex: 1; display: flex; align-items: center; justify-content: center; }
.ucs { position: absolute; left: 37%; top: 41%; width: 34px; height: 42px; font-size: 6px; }

.status { display: grid; grid-template-columns: 345px 81px 45px 46px 46px 91px 31px; gap: 1px; height: 9px; background: #efedef; flex: none; line-height: 8px; }
.status span { border-left: 1px solid #bbb; border-top: 1px solid #bbb; padding-left: 2px; background: #eeedef; white-space: nowrap; }
.status .msg { border: 0; }

.palette { position: absolute; left: 123px; top: 5px; bottom: 0; width: 161px; padding: 2px; background: #d4e0e9; border-left: 1px solid #9db5c6; border-right: 2px solid #9eb2c0; display: flex; flex-direction: column; gap: 2px; overflow: hidden; }
.card { flex: none; background: #eff6fc; border: 1px solid #86a5ba; border-top: 0; }
.card h3, .big h3 { background: linear-gradient(#55799a, #7295b0); color: #fff; }
.card h3 { height: 9px; line-height: 9px; padding-left: 12px; position: relative; margin: 0 -1px; font-weight: bold; }
.card h3::before { content: ""; position: absolute; left: 4px; top: 3px; border: 2px solid transparent; border-bottom-color: #fff; border-top: 0; }
.card:first-child h3 { font-style: italic; }
.grid { display: grid; padding: 1px 0 0; row-gap: 1px; }
.grid button { display: flex; flex-direction: column; align-items: center; white-space: nowrap; min-height: 21px; padding: 1px 0; justify-self: stretch; }
.grid svg { width: 12px; height: 12px; margin-bottom: 1px; }
.grid button:disabled, .bigrow button:disabled { color: #999; }
.grid .on { background: #fdc67f; }
.rule { width: 1px; background: #c5c9cc; margin: 2px 0; }
.g1 { grid-template-columns: 22px 30px 2px 18px 28px; grid-template-rows: 21px 21px; }
.g2 { grid-template-columns: 21px 35px 34px 34px 22px; }
.g3 { grid-template-columns: 20px 38px 20px 36px; }
.g4 { grid-template-columns: 33px 34px 34px 25px 28px; }
.g5 { grid-template-columns: 23px 32px 31px 30px 22px; column-gap: 2px; }
.g6 { grid-template-columns: 22px 20px 34px 16px 34px; }
.scroll { position: absolute; left: 55px; bottom: 0; width: 45px; height: 11px; background: #f69a58; display: grid; place-items: center; }
.scroll svg { width: 14px; height: 8px; }
.pointer { position: absolute; left: 173px; top: 9px; width: 6px; height: 9px; }

.detail { grid-row: 3; margin-left: 30%; width: 62%; display: grid; grid-template-columns: 6px 1fr 84px; background: #e1e9ef; overflow: hidden; font-size: 11px; line-height: 14px; min-height: 0; }
.cap { height: 27px; background: #7b9cb3; color: #fff; line-height: 29px; padding-left: 15px; white-space: nowrap; border-bottom: 0; }
.edge { overflow: hidden; border-right: 1px solid #7b9cb3; }
.edge span { display: block; margin-top: 37px; }
.big { position: relative; margin: 5px 4px 0 5px; border: solid #7b9cb3; border-width: 0 1px; background: #eff6fc; overflow: hidden; }
.big h3 { height: 21px; line-height: 21px; padding-left: 28px; font-size: 12px; font-style: italic; position: relative; }
.big h3::before { content: ""; position: absolute; left: 9px; top: 8px; border: 4px solid transparent; border-bottom-color: #fff; border-top: 0; }
.bigpointer { position: absolute; left: 107px; top: 7px; width: 12px; height: 19px; }
.bigrow { display: grid; grid-template-columns: 50px 66px 2px 46px 52px; grid-template-rows: 50px 30px; padding-top: 5px; }
.bigrow button, .restrow button { display: flex; flex-direction: column; align-items: center; white-space: nowrap; }
.bigrow button:disabled { font-size: 10px; }
.bigrow svg { width: 27px; height: 27px; margin-bottom: 2px; }
.rest { overflow: hidden; box-shadow: inset 6px 0 6px -3px #9aa9b4; }
.restrow { display: grid; grid-template-columns: 39px 38px 7px; margin-top: 1px; border-top: 1px solid #c7cdd2; height: 70px; }
.restrow button { padding-top: 8px; border-right: 1px solid #cbd3d9; }
.restrow button + button { border-right: 0; }
.restrow svg { width: 24px; height: 24px; margin-bottom: 4px; }
.restrow .cut svg { width: 0; }

.marks { position: absolute; left: 0; top: 0; width: 100%; height: 100%; pointer-events: none; }
```
